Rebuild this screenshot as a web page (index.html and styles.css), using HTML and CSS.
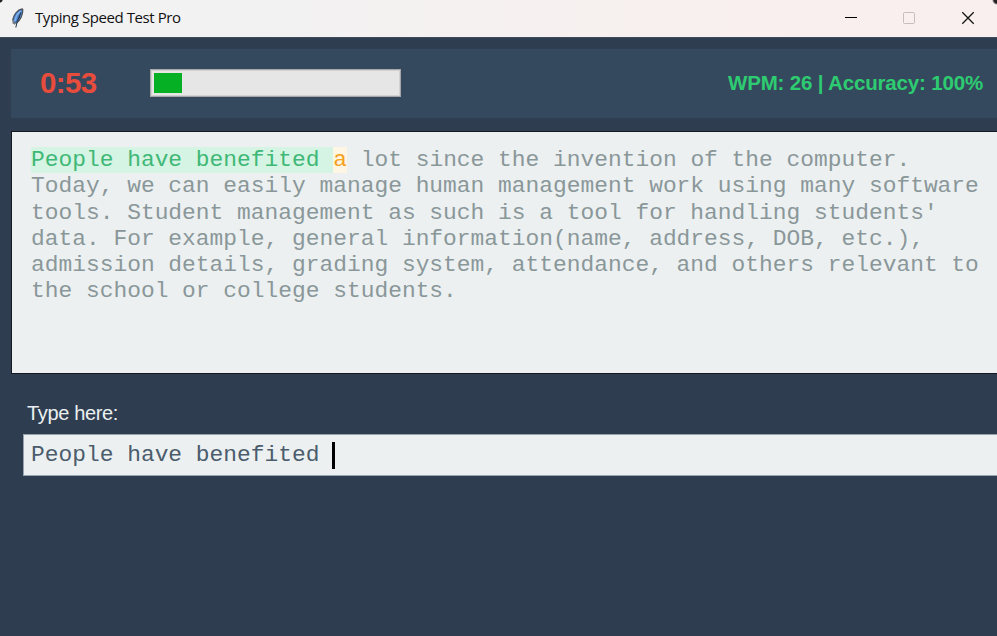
FILE: index.html
```html
<!DOCTYPE html>
<html lang="en">
<head>
<meta charset="utf-8">
<title>Typing Speed Test Pro</title>
<link rel="stylesheet" href="styles.css">
</head>
<body>
<div class="window">
  <header class="titlebar">
    <svg class="feather" width="14" height="22" viewBox="0 0 14 22">
      <path d="M11.2 1.9C6.5 2.9 2.8 7.4 1.9 12.2L2.3 16.2L5.4 16C9.3 13.5 12.1 7.5 11.8 2.6Z" fill="#4a86d2" stroke="#4a4f55" stroke-width="1.2"/>
      <path d="M9.6 4.2C6.8 6.4 4.6 10 4 14" fill="none" stroke="#7fb0ea" stroke-width="1.6"/>
      <path d="M10 5.5C8.2 9.6 6 13 4.8 20.5M8.2 8.5L8.6 11" fill="none" stroke="#2b3b4e" stroke-width="1.1"/>
      <path d="M2.2 13.5L3.6 17.8" stroke="#8c8c8c" stroke-width="1"/>
    </svg>
    <span class="title">Typing Speed Test Pro</span>
    <svg class="controls" width="132" height="16" viewBox="0 0 132 16" fill="none">
      <path d="M0 7.5H12" stroke="#000"/>
      <rect x="58.5" y="2.5" width="11" height="11" rx="1" stroke="#c4bebe"/>
      <path d="M117.3 2.3L128.7 13.7M128.7 2.3L117.3 13.7" stroke="#111" stroke-width="1.25"/>
    </svg>
  </header>
  <main class="content">
    <section class="stats">
      <span class="timer">0:53</span>
      <div class="progress"><div class="bar"></div></div>
      <span class="score">WPM: 26 | Accuracy: 100%</span>
    </section>
    <section class="sample"><span class="done">People have benefited </span><span class="current">a</span><span> lot since the invention of the computer.</span>
Today, we can easily manage human management work using many software
tools. Student management as such is a tool for handling students'
data. For example, general information(name, address, DOB, etc.),
admission details, grading system, attendance, and others relevant to
the school or college students.</section>
    <label class="prompt">Type here:</label>
    <div class="entry"><span>People have benefited </span><i class="caret"></i></div>
  </main>
</div>
</body>
</html>
```
FILE: styles.css
```css
body { margin: 0; background: #2c3e50; overflow: hidden; }
.window { width: 997px; height: 636px; overflow: hidden; background: #2e3e50; font-family: "Liberation Sans", Arial, sans-serif; }
.titlebar {
  height: 37px; box-sizing: border-box; display: flex; align-items: center; padding: 0 20px 1px 11px;
  background:
    radial-gradient(circle at 0 0, #222 2px, transparent 3px),
    radial-gradient(circle at 100% 0, #222 3px, transparent 5px),
    linear-gradient(90deg, #f2f2f2 25%, #f9efee 80%);
}
.feather { margin-top: -1px; }
.title { margin: -2px 0 0 10px; font: 15px/20px "Open Sans", sans-serif; letter-spacing: -0.43px; color: #111; }
.controls { margin-left: auto; }
.content { display: flex; flex-direction: column; padding: 11px 0 0 11px; border-top: 1px solid #3d4c5a; }
.stats { height: 69px; box-sizing: border-box; display: flex; align-items: center; background: #35495e; padding: 0 14px 1px 29px; }
.timer { width: 110px; font-size: 29.5px; font-weight: bold; letter-spacing: -0.6px; color: #e74c3c; }
.progress { width: 251px; height: 28px; box-sizing: border-box; border: 1px solid #a6a8aa; box-shadow: inset 0 0 0 1px #d2d2d2; background: #e6e6e6; padding: 3px; }
.bar { width: 28px; height: 20px; background: #06b025; }
.score { margin-left: auto; font-size: 20.5px; font-weight: bold; letter-spacing: -0.17px; color: #2ecc71; white-space: nowrap; }
.sample {
  height: 243px; box-sizing: border-box; margin: 13px 0 0; padding: 15px 0 0 19px;
  border: 1px solid #14191f; border-right: 0; background: #ecf0f1; color: #8a9799;
  font: 22.9px/26.3px "Liberation Mono", "Courier New", monospace; white-space: pre;
}
.sample span { display: inline-block; }
.done { background: #d5f4e3; color: #3fb877; }
.current { background: #fef6e2; color: #f5a122; }
.prompt { margin: 27px 0 0 16px; font-size: 20px; line-height: 24px; letter-spacing: -0.35px; color: #ecf0f1; }
.entry {
  height: 42px; box-sizing: border-box; margin: 9px 0 0 12px; padding-left: 7px; display: flex; align-items: center;
  border: 1px solid #98a3ad; border-right: 0; background: #ecf0f1; color: #4b5c6d;
  font: 22.9px/26px "Liberation Mono", "Courier New", monospace; white-space: pre;
}
.caret { width: 3px; height: 27px; margin-left: -1px; background: #000; }
```
